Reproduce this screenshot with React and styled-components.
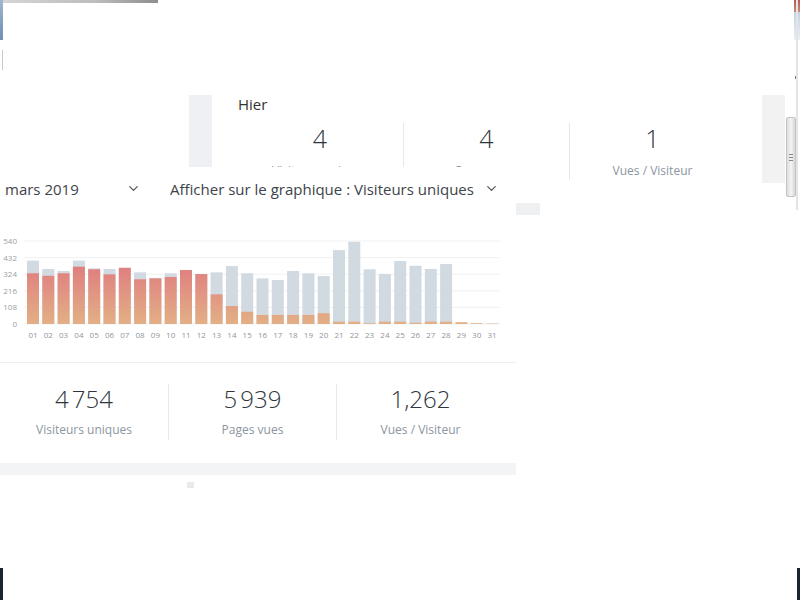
import React from 'react';
import styled, { createGlobalStyle } from 'styled-components';
import { ChevronDown } from 'lucide-react';

const GlobalStyle = createGlobalStyle`
  html, body { margin: 0; padding: 0; background: #fff; }
  body { font-family: "Open Sans", "Liberation Sans", sans-serif; color: #3a4149; }
`;

const visitors = [330,314,330,373,356,323,366,291,297,306,351,325,193,117,80,59,59,59,59,70,15,15,5,15,15,8,15,15,12,5,3];
const pages = [412,358,345,412,362,358,360,336,300,330,351,325,336,377,330,297,286,345,330,312,481,535,356,325,410,379,358,390,0,0,0];

const App = () => {
    return (
        <>
            <GlobalStyle />
            <Desktop>
                <Strip $x={0} $y={0} $w={158} $h={3} $bg="linear-gradient(90deg,#d6d6d6,#bdbdbd 60%,#8e8e8e)" />
                <Strip $x={0} $y={0} $w={3} $h={40} $bg="linear-gradient(180deg,#9fb6cf,#6f8fb3)" />
                <Strip $x={2} $y={50} $w={1} $h={20} $bg="#c9c9c9" />
                <Strip $x={794} $y={0} $w={6} $h={12} $bg="linear-gradient(180deg,#b4584f,#c98b7f)" />
                <Strip $x={794} $y={12} $w={6} $h={28} $bg="linear-gradient(180deg,#c2d3e6,#e8eef5)" />
                <Strip $x={795} $y={76} $w={3} $h={3} $bg="#777" />
                <Strip $x={0} $y={568} $w={3} $h={32} $bg="#1c2230" />
                <Strip $x={797} $y={568} $w={3} $h={32} $bg="#1c2230" />

                <TopCard $x={189} $y={95} $w={596} $h={88}>
                    <Gutter $w={23} $bg="#eef0f3" />
                    <CardBody>
                        <CardTitle>Hier</CardTitle>
                        <StatRow $col={166} $offset={25}>
                            <Stat $first $h={57}>
                                <StatValue $size={25}>4</StatValue>
                                <StatLabel $gap={10}>Visiteurs uniques</StatLabel>
                            </Stat>
                            <Stat $h={57}>
                                <StatValue $size={25}>4</StatValue>
                                <StatLabel $gap={10}>Pages vues</StatLabel>
                            </Stat>
                            <Stat $h={57}>
                                <StatValue $size={25}>1</StatValue>
                                <StatLabel $gap={10}>Vues / Visiteur</StatLabel>
                            </Stat>
                        </StatRow>
                    </CardBody>
                    <Gutter $w={23} $bg="#f2f2f2" />
                </TopCard>

                <Scrollbar $x={786} $y={0} $w={12} $h={210}>
                    <Thumb>
                        <Grip />
                    </Thumb>
                </Scrollbar>

                <ChartPanel $x={0} $y={167} $w={545} $h={330}>
                    <Header>
                        <Select $w={136}>
                            <span>mars 2019</span>
                            <ChevronDown size={15} strokeWidth={2} color="#555" />
                        </Select>
                        <Select>
                            <span>Afficher sur le graphique : Visiteurs uniques</span>
                            <ChevronDown size={15} strokeWidth={2} color="#555" />
                        </Select>
                    </Header>
                    <ChartBox>
                        <BarChart />
                    </ChartBox>
                    <StatRow $col={168} $offset={0} $pad={21} $line>
                        <Stat $first $h={56}>
                            <StatValue $size={24}>4{'\u202F'}754</StatValue>
                            <StatLabel>Visiteurs uniques</StatLabel>
                        </Stat>
                        <Stat $h={56}>
                            <StatValue $size={24}>5{'\u202F'}939</StatValue>
                            <StatLabel>Pages vues</StatLabel>
                        </Stat>
                        <Stat $h={56}>
                            <StatValue $size={24}>1,262</StatValue>
                            <StatLabel>Vues / Visiteur</StatLabel>
                        </Stat>
                    </StatRow>
                    <Band />
                    <Dot />
                    <Tab />
                </ChartPanel>
            </Desktop>
        </>
    )
}

const BarChart = () => {
    const top = 11, base = 94, max = 540;
    const y = v => base - (v / max) * (base - top);
    const ticks = [540, 432, 324, 216, 108, 0];
    return (
        <svg width="516" height="115">
            <defs>
                <linearGradient id="warm" gradientUnits="userSpaceOnUse" x1="0" y1={top} x2="0" y2={base}>
                    <stop offset="0" stopColor="#df6f72" />
                    <stop offset="0.35" stopColor="#e07d7b" />
                    <stop offset="1" stopColor="#e4ad80" />
                </linearGradient>
            </defs>
            {ticks.map(t => (
                <g key={t}>
                    <line x1="24" x2="500" y1={y(t)} y2={y(t)} stroke="#f0f1f3" strokeWidth="1" />
                    <text x="17" y={y(t) + 3} fontSize="8" fill="#9aa0a6" textAnchor="end" fontFamily="Open Sans, sans-serif">{t}</text>
                </g>
            ))}
            {visitors.map((v, i) => {
                const cx = 33 + i * 15.3;
                const p = pages[i];
                return (
                    <g key={i}>
                        {p > 0 && <rect x={cx - 6} y={y(p)} width="12" height={base - y(p)} fill="#d2dae1" />}
                        <rect x={cx - 6} y={y(v)} width="12" height={base - y(v)} fill="url(#warm)" opacity="0.95" />
                        <text x={cx} y="108" fontSize="8" fill="#8f969d" textAnchor="middle" fontFamily="Open Sans, sans-serif">
                            {String(i + 1).padStart(2, '0')}
                        </text>
                    </g>
                )
            })}
        </svg>
    )
}

export default App

const Desktop = styled.div`
position: relative;
width: 800px;
height: 600px;
overflow: hidden;
background: #fff;
`
const Placed = styled.div`
position: absolute;
left: ${p => p.$x}px;
top: ${p => p.$y}px;
width: ${p => p.$w}px;
height: ${p => p.$h}px;
`
const Strip = styled(Placed)`
background: ${p => p.$bg};
`
const TopCard = styled(Placed)`
display: flex;
align-items: stretch;
background: #fff;
`
const Gutter = styled.div`
width: ${p => p.$w}px;
flex-shrink: 0;
background: ${p => p.$bg};
`
const CardBody = styled.div`
flex: 1;
display: flex;
flex-direction: column;
`
const CardTitle = styled.div`
font-size: 15px;
line-height: 20px;
color: #333;
padding-left: 26px;
margin-top: -1px;
margin-bottom: 9px;
`
const StatRow = styled.div`
display: grid;
grid-template-columns: repeat(3, ${p => p.$col}px);
margin-left: ${p => p.$offset}px;
padding-top: ${p => p.$pad || 0}px;
border-top: ${p => p.$line ? '1px solid #eceef0' : 'none'};
height: ${p => p.$line ? '101px' : 'auto'};
box-sizing: border-box;
`
const Stat = styled.div`
display: flex;
flex-direction: column;
align-items: center;
height: ${p => p.$h}px;
border-left: ${p => p.$first ? 'none' : '1px solid #e6e9ec'};
`
const StatValue = styled.div`
font-size: ${p => p.$size}px;
line-height: 30px;
font-weight: 300;
color: #2f363d;
`
const StatLabel = styled.div`
font-size: 12px;
line-height: 16px;
color: #8c96a0;
margin-top: ${p => p.$gap || 8}px;
`
const Scrollbar = styled(Placed)`
display: flex;
flex-direction: column;
align-items: flex-end;
padding-top: 117px;
box-sizing: border-box;
border-right: 2px solid #e4e4e4;
`
const Thumb = styled.div`
width: 8px;
height: 78px;
background: linear-gradient(90deg, #dcdcdc, #f4f4f4 50%, #d6d6d6);
border: 1px solid #c4c4c4;
border-radius: 2px;
display: flex;
align-items: center;
justify-content: center;
`
const Grip = styled.div`
width: 4px;
height: 5px;
border-top: 1px solid #888;
border-bottom: 1px solid #888;
position: relative;
&::after {
  content: '';
  position: absolute;
  left: 0;
  right: 0;
  top: 2px;
  height: 1px;
  background: #888;
}
`
const ChartPanel = styled(Placed)`
background: #fff;
display: flex;
flex-direction: column;
padding-right: 29px;
box-sizing: border-box;
`
const Header = styled.div`
height: 43px;
display: flex;
align-items: center;
padding-left: 5px;
gap: 29px;
font-size: 15px;
color: #3d4348;
`
const Select = styled.div`
display: flex;
align-items: center;
justify-content: space-between;
gap: 10px;
width: ${p => p.$w ? `${p.$w}px` : 'auto'};
`
const ChartBox = styled.div`
padding-top: 20px;
height: 152px;
box-sizing: border-box;
`
const Band = styled.div`
height: 12px;
background: #f3f4f6;
`
const Dot = styled.div`
width: 7px;
height: 6px;
background: #e8eaec;
margin: 7px 0 0 187px;
`
const Tab = styled.div`
position: absolute;
left: 516px;
top: 36px;
width: 24px;
height: 12px;
background: #eef0f2;
`
